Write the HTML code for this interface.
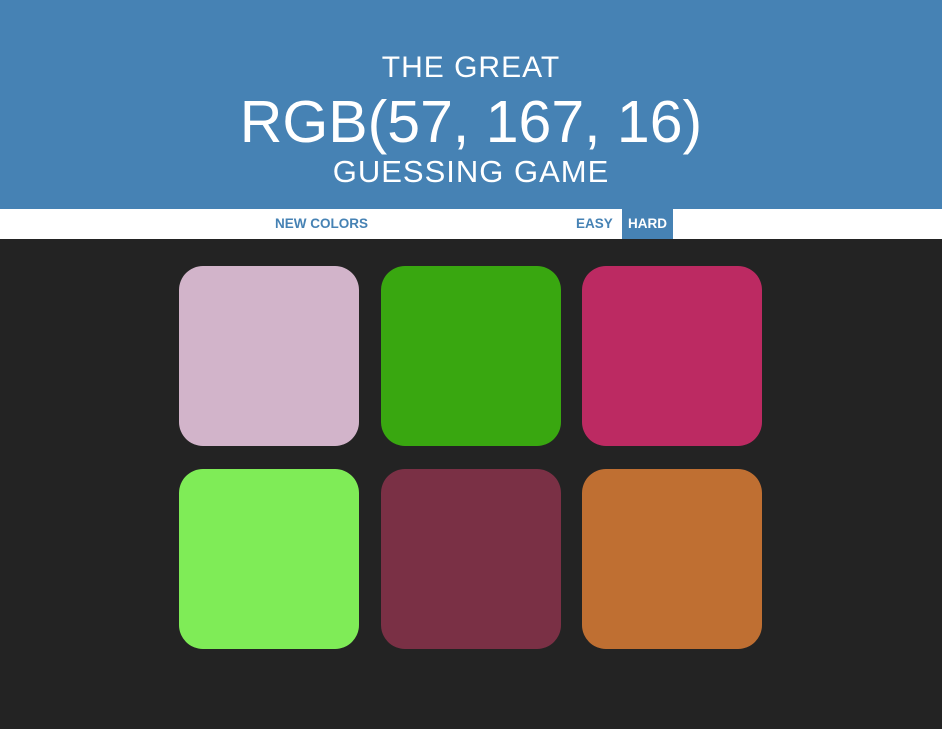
<!DOCTYPE html>
<html><head><style>
body{margin:0;background:#232323;font-family:"Liberation Sans",sans-serif;width:942px;height:729px;overflow:hidden}
#h{background:#4682b4;height:209px;color:#fff;text-align:center;position:relative}
#h div{position:absolute;left:0;right:0;font-weight:normal}
#nav{background:#fff;height:30px;position:relative;font-weight:bold;font-size:13.5px;color:#4682b4}
#nav span{position:absolute;top:0;line-height:30px}
.sq{position:absolute;width:180px;height:180px;border-radius:24px}
</style></head><body>
<div id="h">
<div style="top:51px;font-size:30px;letter-spacing:1px">THE GREAT</div>
<div style="top:88px;font-size:59px">RGB(57, 167, 16)</div>
<div style="top:154px;font-size:31px;letter-spacing:1px">GUESSING GAME</div>
</div>
<div id="nav">
<span style="left:275px">NEW COLORS</span>
<span style="left:576px">EASY</span>
<span style="left:622px;width:51px;height:30px;background:#4682b4;color:#fff;text-align:center">HARD</span>
</div>
<div class="sq" style="left:179px;top:266px;background:#d2b4ca"></div>
<div class="sq" style="left:381px;top:266px;background:#39a710"></div>
<div class="sq" style="left:582px;top:266px;background:#bc2a62"></div>
<div class="sq" style="left:179px;top:469px;background:#7fec57"></div>
<div class="sq" style="left:381px;top:469px;background:#7a3045"></div>
<div class="sq" style="left:582px;top:469px;background:#bf6f32"></div>
</body></html>
